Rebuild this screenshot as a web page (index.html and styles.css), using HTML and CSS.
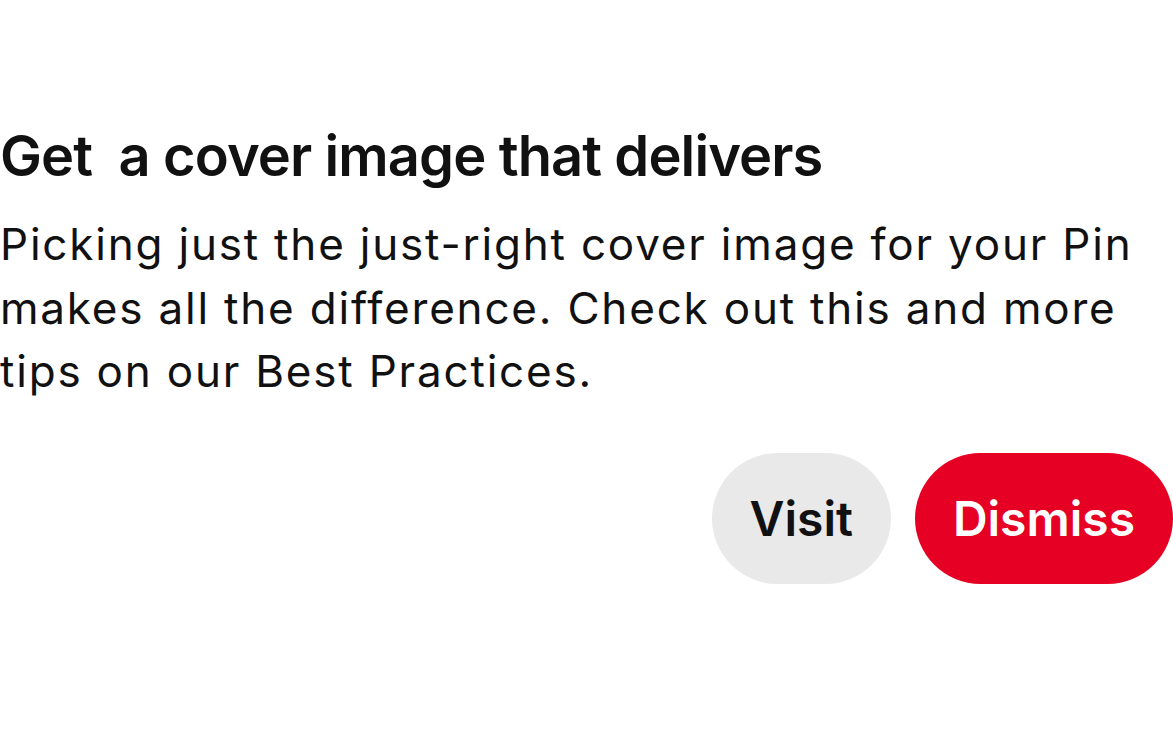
FILE: index.html
```html
<!DOCTYPE html>
<html lang="en">
<head>
  <meta charset="UTF-8">
  <meta name="viewport" content="width=device-width, initial-scale=1.0">
  <title>Tip - Cover Image</title>
  <link rel="stylesheet" href="styles.css">
</head>
<body>
  <div class="tip-container">
    <h2 class="tip-title">Get &nbsp;a cover image that delivers</h2>
    <p class="tip-text">Picking just the just-right cover image for your Pin makes all the difference. Check out this and more tips on our Best Practices.</p>

    <div class="tip-actions">
      <button class="btn btn-secondary">Visit</button>
      <button class="btn btn-primary">Dismiss</button>
    </div>
  </div>
</body>
</html>
```

FILE: styles.css
```css
* {
  box-sizing: border-box;
  margin: 0;
  padding: 0;
}

body {
  background-color: #fff;
  color: #111;
  font-family: Inter, 'Noto Sans', sans-serif;
}

.tip-container {
  width: 1173px;
  padding-top: 124px;
}

.tip-title {
  font-size: 56px;
  font-weight: 600;
  line-height: 64px;
  letter-spacing: -0.9px;
  color: #111;
}

.tip-text {
  margin-top: 25px;
  font-size: 44px;
  font-weight: 400;
  line-height: 63.5px;
  letter-spacing: 1.8px;
  color: #111;
}

.tip-actions {
  display: flex;
  justify-content: flex-end;
  gap: 24px;
  margin-top: 49px;
}

.btn {
  height: 131px;
  padding: 0 38px;
  border: none;
  border-radius: 66px;
  font-family: Inter, 'Noto Sans', sans-serif;
  font-size: 48px;
  font-weight: 600;
  cursor: pointer;
}

.btn-secondary {
  background-color: #e9e9e9;
  color: #111;
}

.btn-primary {
  background-color: #e60023;
  color: #fff;
}
```
